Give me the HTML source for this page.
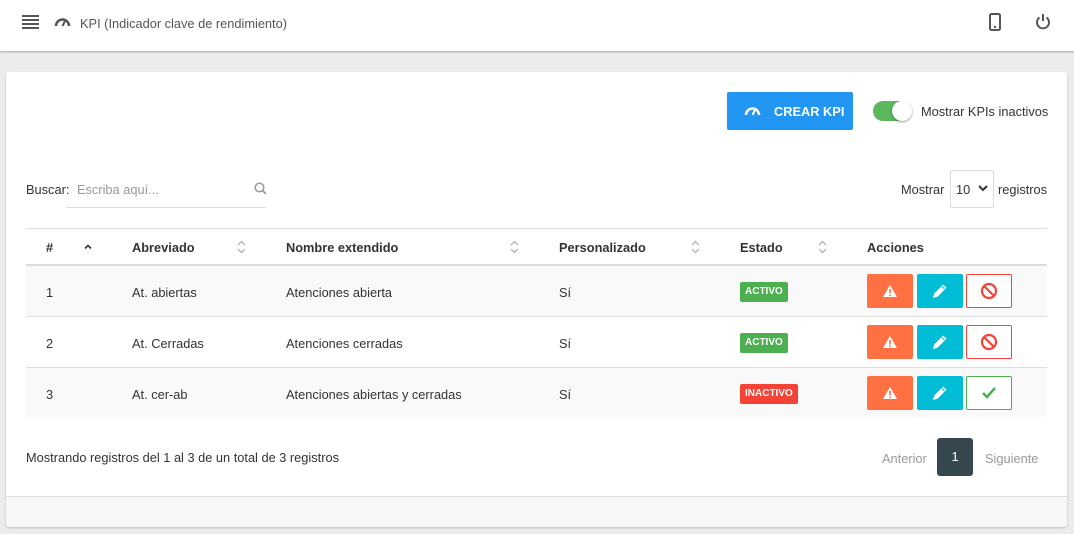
<!DOCTYPE html>
<html><head><meta charset="utf-8"><style>
*{box-sizing:border-box;margin:0;padding:0}
body{width:1074px;height:534px;background:#ececec;font-family:"Liberation Sans",sans-serif;font-size:12.8px;color:#333;position:relative;overflow:hidden}
.abs{position:absolute}
.hdr{left:0;top:0;width:1074px;height:51px;background:#fff;box-shadow:0 1px 2px rgba(0,0,0,.3)}
.card{left:6px;top:72px;width:1061px;height:455px;background:#fff;border-radius:3px;box-shadow:0 1px 2px rgba(0,0,0,.2)}
.foot{left:6px;top:496px;width:1061px;height:31px;background:#f7f7f7;border-top:1px solid #ddd;border-radius:0 0 3px 3px}
.row{left:26px;width:1021px;height:51px;border-bottom:1px solid #ddd}
.t{position:absolute;white-space:nowrap}
.b{font-weight:bold}
.btn{position:absolute;width:46px;height:34px;border-radius:2px;display:flex;align-items:center;justify-content:center}
.badge{position:absolute;color:#fff;font-size:10px;font-weight:bold;padding:5px 5px;line-height:10px;border-radius:2px}
</style></head><body>
<div class="abs hdr">
 <svg class="abs" style="left:22px;top:15px" width="17" height="14"><g fill="#555"><rect y="0" width="17" height="2"/><rect y="4" width="17" height="2"/><rect y="8" width="17" height="2"/><rect y="12" width="17" height="2"/></g></svg>
 <svg class="abs" style="left:54px;top:17px" width="17" height="10" viewBox="0 0 17 10"><path d="M2 9A6.5 6.5 0 0 1 15 9" fill="none" stroke="#555" stroke-width="2.5"/><path d="M8.5 9L11 4" stroke="#555" stroke-width="2"/></svg>
 <div class="t" style="left:80px;top:16px;color:#555">KPI (Indicador clave de rendimiento)</div>
 <svg class="abs" style="left:989px;top:13px" width="12" height="18"><rect x="1" y="1" width="10" height="16" rx="1.5" fill="none" stroke="#555" stroke-width="2"/><rect x="5" y="13" width="2" height="2" fill="#555"/></svg>
 <svg class="abs" style="left:1035px;top:13px" width="16" height="17"><path d="M4.5 4.5A6 6 0 1 0 11.5 4.5" fill="none" stroke="#555" stroke-width="2"/><path d="M8 1v7" stroke="#555" stroke-width="2"/></svg>
</div>
<div class="abs card"></div>
<div class="abs foot"></div>
<div class="abs" style="left:727px;top:92px;width:126px;height:38px;background:#2196f3;border-radius:2px"></div>
<svg class="abs" style="left:744px;top:106px" width="17" height="10" viewBox="0 0 17 10"><path d="M2 9A6.5 6.5 0 0 1 15 9" fill="none" stroke="#fff" stroke-width="2.5"/><path d="M8.5 9L11 4" stroke="#fff" stroke-width="2"/></svg>
<div class="t b" style="left:774px;top:104px;color:#fff">CREAR KPI</div>
<div class="abs" style="left:873px;top:101px;width:38px;height:20px;background:#5cb85c;border-radius:10px"></div>
<div class="abs" style="left:892px;top:101px;width:20px;height:20px;background:#fff;border-radius:50%;box-shadow:0 1px 2px rgba(0,0,0,.4)"></div>
<div class="t" style="left:921px;top:104px">Mostrar KPIs inactivos</div>
<div class="t" style="left:26px;top:182px">Buscar:</div>
<div class="abs" style="left:66px;top:207px;width:200px;height:1px;background:#ddd"></div>
<div class="t" style="left:77px;top:182px;color:#999">Escriba aquí...</div>
<svg class="abs" style="left:254px;top:182px" width="13" height="13"><circle cx="5.5" cy="5.5" r="4.3" fill="none" stroke="#999" stroke-width="1.5"/><path d="M8.5 8.5L12 12" stroke="#999" stroke-width="1.8"/></svg>
<div class="t" style="left:901px;top:182px">Mostrar</div>
<div class="abs" style="left:950px;top:170px;width:44px;height:38px;border:1px solid #ddd;border-radius:2px"></div>
<div class="t" style="left:956px;top:182px">10</div>
<svg class="abs" style="left:978px;top:185px" width="10" height="7"><path d="M1 1l4 4 4-4" fill="none" stroke="#333" stroke-width="2"/></svg>
<div class="t" style="left:998px;top:182px">registros</div>
<div class="abs" style="left:26px;top:228px;width:1021px;height:38px;border-top:1px solid #ddd;border-bottom:2px solid #ddd"></div>
<div class="t b" style="left:46px;top:240px">#</div>
<svg class="abs" style="left:84px;top:244px" width="8" height="5"><path d="M1 4.5L4 1.5L7 4.5" fill="none" stroke="#333" stroke-width="1.6"/></svg>
<div class="t b" style="left:132px;top:240px">Abreviado</div>
<div class="t b" style="left:286px;top:240px">Nombre extendido</div>
<div class="t b" style="left:559px;top:240px">Personalizado</div>
<div class="t b" style="left:740px;top:240px">Estado</div>
<div class="t b" style="left:867px;top:240px">Acciones</div>
<svg class="abs" style="left:237px;top:240px" width="9" height="14"><path d="M1 5l3.5-3.5L8 5M1 9l3.5 3.5L8 9" fill="none" stroke="#aaa" stroke-width="1.2"/></svg>
<svg class="abs" style="left:510px;top:240px" width="9" height="14"><path d="M1 5l3.5-3.5L8 5M1 9l3.5 3.5L8 9" fill="none" stroke="#aaa" stroke-width="1.2"/></svg>
<svg class="abs" style="left:691px;top:240px" width="9" height="14"><path d="M1 5l3.5-3.5L8 5M1 9l3.5 3.5L8 9" fill="none" stroke="#aaa" stroke-width="1.2"/></svg>
<svg class="abs" style="left:818px;top:240px" width="9" height="14"><path d="M1 5l3.5-3.5L8 5M1 9l3.5 3.5L8 9" fill="none" stroke="#aaa" stroke-width="1.2"/></svg>

<div class="abs row" style="top:266px;background:#f9f9f9"></div>
<div class="abs row" style="top:317px;background:#fff"></div>
<div class="abs row" style="top:368px;background:#f9f9f9;border-bottom:none;height:49px"></div>

<div class="t" style="left:46px;top:285px">1</div><div class="t" style="left:132px;top:285px">At. abiertas</div><div class="t" style="left:286px;top:285px">Atenciones abierta</div><div class="t" style="left:559px;top:285px">Sí</div>
<div class="badge" style="left:740px;top:282px;background:#4caf50">ACTIVO</div>
<div class="t" style="left:46px;top:336px">2</div><div class="t" style="left:132px;top:336px">At. Cerradas</div><div class="t" style="left:286px;top:336px">Atenciones cerradas</div><div class="t" style="left:559px;top:336px">Sí</div>
<div class="badge" style="left:740px;top:333px;background:#4caf50">ACTIVO</div>
<div class="t" style="left:46px;top:387px">3</div><div class="t" style="left:132px;top:387px">At. cer-ab</div><div class="t" style="left:286px;top:387px">Atenciones abiertas y cerradas</div><div class="t" style="left:559px;top:387px">Sí</div>
<div class="badge" style="left:740px;top:384px;background:#f44336">INACTIVO</div>

<div class="btn" style="left:867px;top:274px;background:#ff7043"><svg width="16" height="14"><path d="M8 1L15 13H1Z" fill="#fff"/><rect x="7.2" y="5" width="1.6" height="4.5" fill="#ff7043"/><rect x="7.2" y="10.5" width="1.6" height="1.6" fill="#ff7043"/></svg></div>
<div class="btn" style="left:917px;top:274px;background:#00bcd4"><svg width="18" height="18"><path d="M2 16l1.2-4.5 9-9 3.3 3.3-9 9z" fill="#fff"/><path d="M11 4.5l2.5 2.5" stroke="#00bcd4" stroke-width="1"/></svg></div>
<div class="btn" style="left:966px;top:274px;border:1px solid #f44336;background:#fff"><svg width="18" height="18"><circle cx="9" cy="9" r="7" fill="none" stroke="#f44336" stroke-width="2.2"/><path d="M4 4l10 10" stroke="#f44336" stroke-width="2.2"/></svg></div>
<div class="btn" style="left:867px;top:325px;background:#ff7043"><svg width="16" height="14"><path d="M8 1L15 13H1Z" fill="#fff"/><rect x="7.2" y="5" width="1.6" height="4.5" fill="#ff7043"/><rect x="7.2" y="10.5" width="1.6" height="1.6" fill="#ff7043"/></svg></div>
<div class="btn" style="left:917px;top:325px;background:#00bcd4"><svg width="18" height="18"><path d="M2 16l1.2-4.5 9-9 3.3 3.3-9 9z" fill="#fff"/><path d="M11 4.5l2.5 2.5" stroke="#00bcd4" stroke-width="1"/></svg></div>
<div class="btn" style="left:966px;top:325px;border:1px solid #f44336;background:#fff"><svg width="18" height="18"><circle cx="9" cy="9" r="7" fill="none" stroke="#f44336" stroke-width="2.2"/><path d="M4 4l10 10" stroke="#f44336" stroke-width="2.2"/></svg></div>
<div class="btn" style="left:867px;top:376px;background:#ff7043"><svg width="16" height="14"><path d="M8 1L15 13H1Z" fill="#fff"/><rect x="7.2" y="5" width="1.6" height="4.5" fill="#ff7043"/><rect x="7.2" y="10.5" width="1.6" height="1.6" fill="#ff7043"/></svg></div>
<div class="btn" style="left:917px;top:376px;background:#00bcd4"><svg width="18" height="18"><path d="M2 16l1.2-4.5 9-9 3.3 3.3-9 9z" fill="#fff"/><path d="M11 4.5l2.5 2.5" stroke="#00bcd4" stroke-width="1"/></svg></div>
<div class="btn" style="left:966px;top:376px;border:1px solid #4caf50;background:#fff"><svg width="16" height="14"><path d="M2 7l4 4 8-9" fill="none" stroke="#4caf50" stroke-width="2.5"/></svg></div>

<div class="t" style="left:26px;top:450px">Mostrando registros del 1 al 3 de un total de 3 registros</div>
<div class="t" style="left:882px;top:451px;color:#999">Anterior</div>
<div class="abs" style="left:937px;top:438px;width:36px;height:38px;background:#37474f;border-radius:3px;color:#fff;text-align:center;line-height:38px">1</div>
<div class="t" style="left:985px;top:451px;color:#999">Siguiente</div>
</body></html>
